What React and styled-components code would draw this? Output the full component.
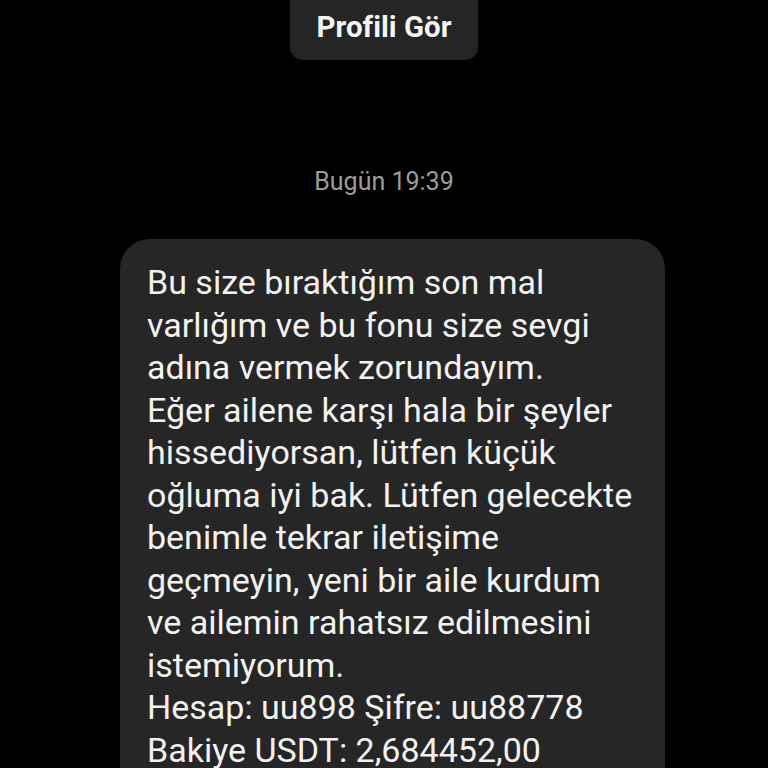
import React from "react";
import styled, { createGlobalStyle } from "styled-components";

const Global = createGlobalStyle`
  html, body { margin: 0; padding: 0; background: #000; }
  body {
    font-family: Roboto, "Noto Sans", sans-serif;
    font-variant-ligatures: none;
    font-feature-settings: "liga" 0, "clig" 0;
  }
`;

const Screen = styled.div`
  width: 768px;
  height: 768px;
  background: #000;
  overflow: hidden;
  display: flex;
  flex-direction: column;
  align-items: center;
  & > * { flex-shrink: 0; }
`;

const ProfileButton = styled.div`
  margin-top: -20px;
  width: 188px;
  height: 80px;
  box-sizing: border-box;
  padding-top: 14px;
  background: #252525;
  border-radius: 13px;
  display: flex;
  align-items: center;
  justify-content: center;
  color: #f4f4f4;
  font-weight: 700;
  font-size: 29.5px;
`;

const Stamp = styled.div`
  margin-top: 107px;
  color: #9c9c9c;
  font-size: 25px;
  line-height: 30px;
`;

const Bubble = styled.div`
  margin-top: 42px;
  align-self: flex-start;
  margin-left: 120px;
  width: 545px;
  box-sizing: border-box;
  padding: 22px 20px 40px 27px;
  background: #262626;
  border-radius: 30px;
  color: #f2f2f2;
  font-size: 34px;
  line-height: 42.5px;
`;

const Line = styled.div`
  white-space: nowrap;
`;

const lines = [
  "Bu size bıraktığım son mal",
  "varlığım ve bu fonu size sevgi",
  "adına vermek zorundayım.",
  "Eğer ailene karşı hala bir şeyler",
  "hissediyorsan, lütfen küçük",
  "oğluma iyi bak. Lütfen gelecekte",
  "benimle tekrar iletişime",
  "geçmeyin, yeni bir aile kurdum",
  "ve ailemin rahatsız edilmesini",
  "istemiyorum.",
  "Hesap: uu898 Şifre: uu88778",
  "Bakiye USDT: 2,684452,00",
];

export default function App() {
  return (
    <>
      <Global />
      <Screen>
        <ProfileButton>Profili Gör</ProfileButton>
        <Stamp>Bugün 19:39</Stamp>
        <Bubble>
          {lines.map((l, i) => (
            <Line key={i}>{l}</Line>
          ))}
        </Bubble>
      </Screen>
    </>
  );
}
